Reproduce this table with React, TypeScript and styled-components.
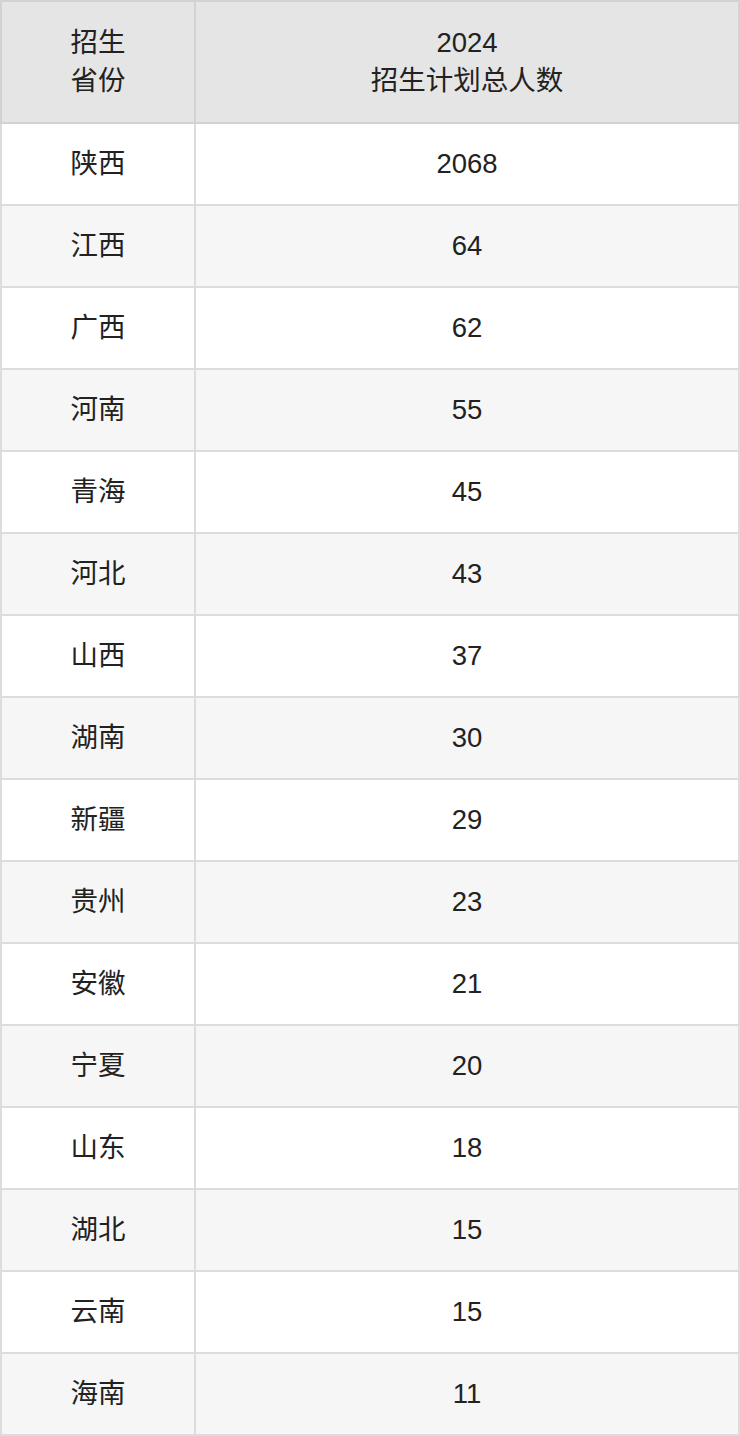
import React from "react";
import styled, { createGlobalStyle } from "styled-components";

const rows: [string, number][] = [
  ["陕西", 2068],
  ["江西", 64],
  ["广西", 62],
  ["河南", 55],
  ["青海", 45],
  ["河北", 43],
  ["山西", 37],
  ["湖南", 30],
  ["新疆", 29],
  ["贵州", 23],
  ["安徽", 21],
  ["宁夏", 20],
  ["山东", 18],
  ["湖北", 15],
  ["云南", 15],
  ["海南", 11],
];

const App: React.FC = () => {
  return (
    <>
      <GlobalStyle />
      <Table>
        <colgroup>
          <ProvinceCol />
          <col />
        </colgroup>
        <thead>
          <tr>
            <HeadCell>
              招生
              <br />
              省份
            </HeadCell>
            <HeadCell>
              2024
              <br />
              招生计划总人数
            </HeadCell>
          </tr>
        </thead>
        <tbody>
          {rows.map(([name, count], index) => (
            <Row key={name + index} striped={index % 2 === 1}>
              <Cell>{name}</Cell>
              <Cell>{count}</Cell>
            </Row>
          ))}
        </tbody>
      </Table>
    </>
  );
};

const GlobalStyle = createGlobalStyle`
  body {
    margin: 0;
    background: #fff;
    font-family: "Liberation Sans", "Noto Sans CJK SC", sans-serif;
  }
`;

const Table = styled.table`
  width: 740px;
  table-layout: fixed;
  border-collapse: collapse;
  font-size: 27.5px;
  line-height: 38px;
  color: #222;
`;

const ProvinceCol = styled.col`
  width: 194px;
`;

const HeadCell = styled.th`
  height: 120px;
  padding: 0;
  font-weight: normal;
  text-align: center;
  vertical-align: middle;
  background: #e5e5e5;
  border: 2px solid #d2d2d2;
`;

const Row = styled.tr<{ striped: boolean }>`
  background: ${({ striped }) => (striped ? "#f6f6f6" : "#fff")};
`;

const Cell = styled.td`
  height: 80px;
  padding: 0;
  text-align: center;
  vertical-align: middle;
  border: 2px solid #dcdcdc;
`;

export default App;
